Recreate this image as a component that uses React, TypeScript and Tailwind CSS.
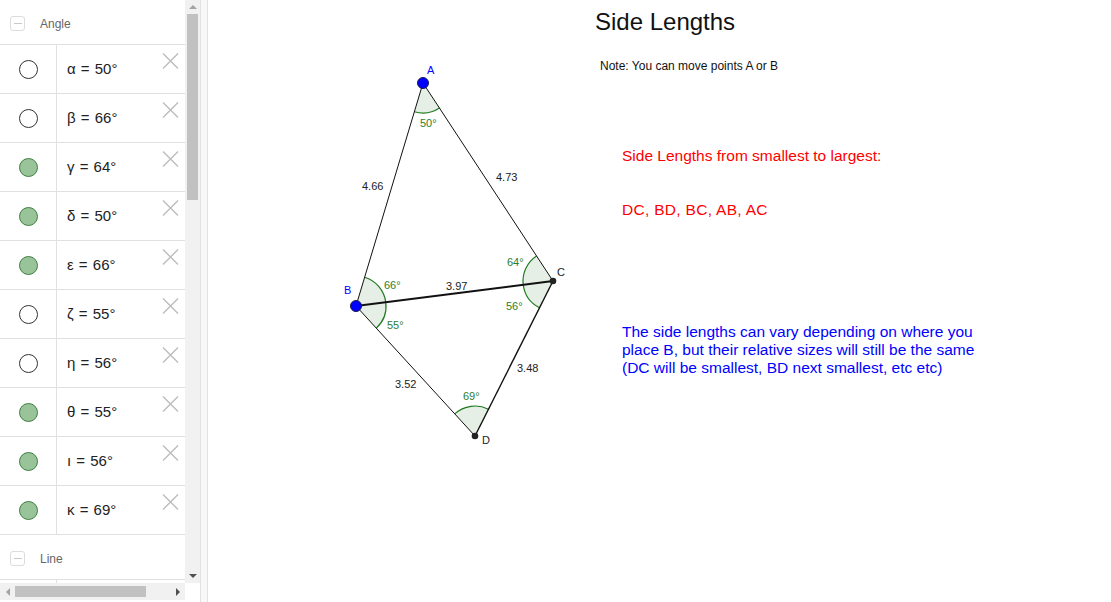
import React from "react";

const rows = [
  { label: "α", value: "50°", on: false },
  { label: "β", value: "66°", on: false },
  { label: "γ", value: "64°", on: true },
  { label: "δ", value: "50°", on: true },
  { label: "ε", value: "66°", on: true },
  { label: "ζ", value: "55°", on: false },
  { label: "η", value: "56°", on: false },
  { label: "θ", value: "55°", on: true },
  { label: "ı", value: "56°", on: true },
  { label: "κ", value: "69°", on: true },
];

function GroupHeader({ title }: { title: string }) {
  return (
    <div className="flex h-[45px] shrink-0 items-center gap-[15px] border-b border-[#e0e0e0] pl-[10px] pt-[3px]">
      <div className="flex h-[15px] w-[15px] items-center justify-center rounded-[3px] border border-[#dcdcdc]">
        <div className="h-[1.5px] w-[8px] bg-[#c8c8c8]" />
      </div>
      <span className="text-[12px] text-[#666]">{title}</span>
    </div>
  );
}

function Row({ label, value, on }: { label: string; value: string; on: boolean }) {
  return (
    <div className="flex h-[49px] shrink-0 border-b border-[#e0e0e0]">
      <div className="flex w-[57px] items-center justify-center border-r border-[#e0e0e0]">
        <div
          className={
            on
              ? "h-[19px] w-[19px] rounded-full border border-[#3f7f3f] bg-[#99c399]"
              : "h-[19px] w-[19px] rounded-full border border-[#333] bg-white"
          }
        />
      </div>
      <div className="relative flex flex-1 items-center pl-[10px] text-[15px] text-[#222]">
        <span>
          {label} <span className="mx-[1px]">=</span> {value}
        </span>
        <svg className="absolute right-[6px] top-[8px]" width="17" height="16" viewBox="0 0 17 16">
          <path d="M1 0.5 L16 15.5 M16 0.5 L1 15.5" stroke="#bcbcbc" strokeWidth="1.4" />
        </svg>
      </div>
    </div>
  );
}

function Algebra() {
  return (
    <div className="flex w-[200px] shrink-0 flex-col">
      <div className="flex h-[583px]">
        <div className="flex w-[185px] flex-col overflow-hidden">
          <GroupHeader title="Angle" />
          {rows.map((r) => (
            <Row key={r.label} {...r} />
          ))}
          <GroupHeader title="Line" />
          <div className="ml-[56px] h-[10px] border-l border-[#e0e0e0]" />
        </div>
        <div className="flex w-[15px] flex-col items-center bg-[#f1f1f1]">
          <div className="flex h-[14px] items-center justify-center">
            <div className="h-0 w-0 border-x-[4px] border-b-[4px] border-x-transparent border-b-[#a3a3a3]" />
          </div>
          <div className="h-[186px] w-[11px] bg-[#c1c1c1]" />
          <div className="flex-1" />
          <div className="flex h-[14px] items-center justify-center">
            <div className="h-0 w-0 border-x-[4px] border-t-[4px] border-x-transparent border-t-[#505050]" />
          </div>
        </div>
      </div>
      <div className="flex h-[17px]">
        <div className="flex w-[185px] items-center bg-[#f1f1f1]">
          <div className="flex w-[15px] items-center justify-center">
            <div className="h-0 w-0 border-y-[4px] border-r-[4px] border-y-transparent border-r-[#a3a3a3]" />
          </div>
          <div className="h-[11px] w-[131px] bg-[#c1c1c1]" />
          <div className="flex-1" />
          <div className="flex w-[15px] items-center justify-center">
            <div className="h-0 w-0 border-y-[4px] border-l-[4px] border-y-transparent border-l-[#505050]" />
          </div>
        </div>
        <div className="w-[15px] bg-white" />
      </div>
    </div>
  );
}

// point coordinates relative to the canvas (page x - 208)
const A = { x: 215, y: 83 };
const B = { x: 148, y: 306 };
const C = { x: 345, y: 281 };
const D = { x: 267, y: 436 };

type P = { x: number; y: number };

function sector(v: P, p1: P, p2: P, r = 30) {
  const a1 = Math.atan2(p1.y - v.y, p1.x - v.x);
  let a2 = Math.atan2(p2.y - v.y, p2.x - v.x);
  let d = a2 - a1;
  while (d <= -Math.PI) d += 2 * Math.PI;
  while (d > Math.PI) d -= 2 * Math.PI;
  a2 = a1 + d;
  const s = { x: v.x + r * Math.cos(a1), y: v.y + r * Math.sin(a1) };
  const e = { x: v.x + r * Math.cos(a2), y: v.y + r * Math.sin(a2) };
  const sweep = d > 0 ? 1 : 0;
  return {
    fill: `M${v.x} ${v.y} L${s.x} ${s.y} A${r} ${r} 0 0 ${sweep} ${e.x} ${e.y} Z`,
    arc: `M${s.x} ${s.y} A${r} ${r} 0 0 ${sweep} ${e.x} ${e.y}`,
  };
}

function Angle({ v, p1, p2 }: { v: P; p1: P; p2: P }) {
  const s = sector(v, p1, p2);
  return (
    <g>
      <path d={s.fill} fill="#006400" fillOpacity="0.1" />
      <path d={s.arc} fill="none" stroke="#1f7a1f" strokeWidth="1.2" />
    </g>
  );
}

function Figure() {
  const green = "#2e7d2e";
  return (
    <svg className="absolute left-0 top-0" width="903" height="602" viewBox="0 0 903 602">
      <Angle v={A} p1={B} p2={C} />
      <Angle v={B} p1={A} p2={C} />
      <Angle v={B} p1={C} p2={D} />
      <Angle v={C} p1={A} p2={B} />
      <Angle v={C} p1={B} p2={D} />
      <Angle v={D} p1={B} p2={C} />
      <g stroke="#111" strokeWidth="1">
        <line x1={A.x} y1={A.y} x2={B.x} y2={B.y} />
        <line x1={A.x} y1={A.y} x2={C.x} y2={C.y} />
        <line x1={B.x} y1={B.y} x2={C.x} y2={C.y} strokeWidth="2" />
        <line x1={B.x} y1={B.y} x2={D.x} y2={D.y} />
        <line x1={C.x} y1={C.y} x2={D.x} y2={D.y} strokeWidth="1.4" />
      </g>
      <circle cx={A.x} cy={A.y} r="5.5" fill="#0000ff" stroke="#1a1a4d" strokeWidth="1" />
      <circle cx={B.x} cy={B.y} r="5.5" fill="#0000ff" stroke="#1a1a4d" strokeWidth="1" />
      <circle cx={C.x} cy={C.y} r="3.3" fill="#222" />
      <circle cx={D.x} cy={D.y} r="3.3" fill="#222" />
      <g fontFamily="'Liberation Sans', Arial, sans-serif" fontSize="11">
        <text x="219" y="74" fill="#0000ff">A</text>
        <text x="136" y="294" fill="#0000ff">B</text>
        <text x="349" y="276" fill="#222">C</text>
        <text x="274" y="444" fill="#222">D</text>
        <text x="154" y="190" fill="#222">4.66</text>
        <text x="288" y="181" fill="#222">4.73</text>
        <text x="238" y="290" fill="#222">3.97</text>
        <text x="187" y="388" fill="#222">3.52</text>
        <text x="309" y="372" fill="#222">3.48</text>
        <text x="212" y="127" fill={green}>50°</text>
        <text x="176" y="289" fill={green}>66°</text>
        <text x="179" y="329" fill={green}>55°</text>
        <text x="299" y="266" fill={green}>64°</text>
        <text x="298" y="310" fill={green}>56°</text>
        <text x="255" y="400" fill={green}>69°</text>
      </g>
    </svg>
  );
}

export default function App() {
  return (
    <div className="flex h-[602px] w-[1111px] overflow-hidden bg-white font-['Liberation_Sans',Arial,sans-serif]">
      <Algebra />
      <div className="w-[8px] shrink-0 border-x border-[#e2e2e2] bg-[#f8f8f8]" />
      <div className="relative flex-1">
        <Figure />
        <div className="absolute left-[387px] top-[4px] text-[24px] text-[#111]">Side Lengths</div>
        <div className="absolute left-[392px] top-[57px] text-[12px] text-[#111]">
          Note: You can move points A or B
        </div>
        <div className="absolute left-[414px] top-[144px] text-[15.5px] text-[#ff0000]">
          Side Lengths from smallest to largest:
        </div>
        <div className="absolute left-[414px] top-[198px] text-[15.5px] tracking-[0.3px] text-[#ff0000]">
          DC, BD, BC, AB, AC
        </div>
        <div className="absolute left-[414px] top-[323px] text-[15.5px] leading-[18px] text-[#0000ff]">
          <div>The side lengths can vary depending on where you</div>
          <div>place B, but their relative sizes will still be the same</div>
          <div>(DC will be smallest, BD next smallest, etc etc)</div>
        </div>
      </div>
    </div>
  );
}
